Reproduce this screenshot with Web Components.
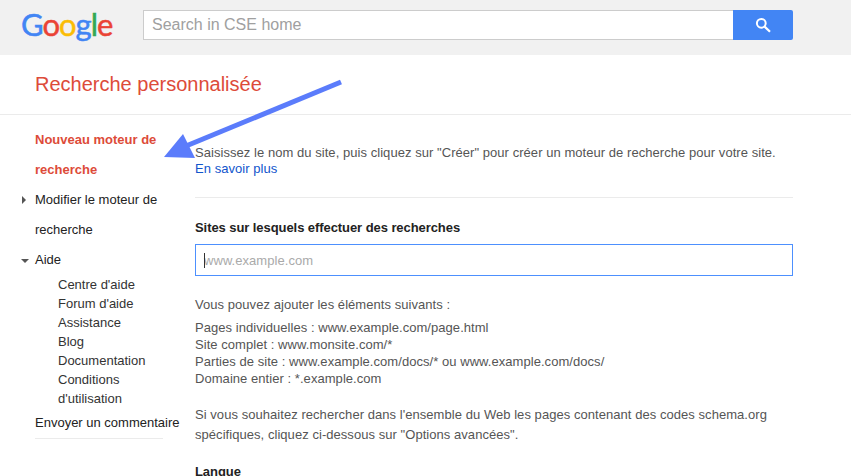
<!DOCTYPE html>
<html lang="fr">
<head>
<meta charset="utf-8">
<title>Recherche personnalisée</title>
<style>
    html, body { margin: 0; height: 476px; overflow: hidden; background: #fff; }
    body { font-family: "Liberation Sans", Arial, sans-serif; font-size: 13px; color: #222; }
</style>
</head>
<body>
<cse-app>
    <cse-header slot="header" placeholder="Search in CSE home"></cse-header>
    <cse-title slot="title">Recherche personnalisée</cse-title>
    <cse-sidebar slot="sidebar">
        <side-item active>Nouveau moteur de recherche</side-item>
        <side-item toggle="closed">Modifier le moteur de recherche</side-item>
        <side-item toggle="open">Aide
            <sub-item slot="children">Centre d'aide</sub-item>
            <sub-item slot="children">Forum d'aide</sub-item>
            <sub-item slot="children">Assistance</sub-item>
            <sub-item slot="children">Blog</sub-item>
            <sub-item slot="children">Documentation</sub-item>
            <sub-item slot="children">Conditions d'utilisation</sub-item>
        </side-item>
        <side-item tight>Envoyer un commentaire</side-item>
    </cse-sidebar>
    <cse-main slot="main"></cse-main>
    <arrow-overlay slot="overlay"></arrow-overlay>
</cse-app>

<script>
class CseApp extends HTMLElement {
    constructor() {
        super();
        this.attachShadow({ mode: 'open' });
        this.shadowRoot.innerHTML = `
            <style>
                :host { display: block; position: relative; width: 851px; height: 476px; overflow: hidden; }
                .body { display: flex; }
            </style>
            <slot name="header"></slot>
            <slot name="title"></slot>
            <div class="body">
                <slot name="sidebar"></slot>
                <slot name="main"></slot>
            </div>
            <slot name="overlay"></slot>
        `;
    }
}

class CseHeader extends HTMLElement {
    constructor() {
        super();
        this.attachShadow({ mode: 'open' });
    }

    connectedCallback() {
        this.shadowRoot.innerHTML = `
            <style>
                :host { display: flex; align-items: center; height: 55px; background: #f1f1f1; padding-left: 21px; }
                .logo {
                    width: 122px; margin-top: -8px; font-family: "Lato", sans-serif; font-size: 31px;
                    letter-spacing: -1px; line-height: 40px; -webkit-text-stroke: .5px currentColor;
                }
                .search { display: flex; width: 650px; height: 30px; margin-top: -5px; }
                .box {
                    flex: 1; box-sizing: border-box; border: 1px solid #ccc; border-right: 0; background: #fff;
                    padding-left: 8px; font-size: 16px; line-height: 27px; color: #a0a0a0;
                }
                .btn {
                    display: flex; align-items: center; justify-content: center; width: 60px;
                    background: #4285f4; border-radius: 0 2px 2px 0;
                }
            </style>
            <div class="logo"><span style="color:#4285f4">G</span><span style="color:#ea4335">o</span><span style="color:#fbbc05">o</span><span style="color:#4285f4">g</span><span style="color:#34a853">l</span><span style="color:#ea4335">e</span></div>
            <div class="search">
                <div class="box">${this.getAttribute('placeholder')}</div>
                <div class="btn">
                    <svg width="16" height="16" viewBox="0 0 16 16" fill="none" stroke="#fff">
                        <circle cx="6.3" cy="6.3" r="4.4" stroke-width="2"/>
                        <path d="M9.6 9.6 15 14.8" stroke-width="2.2"/>
                    </svg>
                </div>
            </div>
        `;
    }
}

class CseTitle extends HTMLElement {
    constructor() {
        super();
        this.attachShadow({ mode: 'open' });
        this.shadowRoot.innerHTML = `
            <style>
                :host {
                    display: block; box-sizing: border-box; height: 60px; padding: 16px 0 0 35px;
                    border-bottom: 1px solid #ebebeb; color: #dd4b39; font-size: 20px; line-height: 26px;
                }
            </style>
            <slot></slot>
        `;
    }
}

class CseSidebar extends HTMLElement {
    constructor() {
        super();
        this.attachShadow({ mode: 'open' });
        this.shadowRoot.innerHTML = `
            <style>
                :host { display: block; flex: none; width: 195px; padding-top: 10px; box-sizing: border-box; }
                .list { margin-left: 35px; width: 128px; border-bottom: 1px solid #ebebeb; }
            </style>
            <div class="list"><slot></slot></div>
        `;
    }
}

class SideItem extends HTMLElement {
    constructor() {
        super();
        this.attachShadow({ mode: 'open' });
        this.shadowRoot.innerHTML = `
            <style>
                :host { display: block; position: relative; line-height: 30px; color: #222; }
                :host([active]) { color: #dd4b39; font-weight: bold; }
                :host([tight]) { white-space: nowrap; }
                .arrow { position: absolute; width: 0; height: 0; border-style: solid; border-color: transparent; }
                :host([toggle="closed"]) .arrow { left: -13px; top: 11px; border-width: 4px 0 4px 4px; border-left-color: #555; }
                :host([toggle="open"]) .arrow { left: -14px; top: 14px; border-width: 4px 4px 0 4px; border-top-color: #555; }
                .kids { margin-left: 23px; }
            </style>
            <span class="arrow"></span>
            <slot></slot>
            <div class="kids"><slot name="children"></slot></div>
        `;
    }
}

class SubItem extends HTMLElement {
    constructor() {
        super();
        this.attachShadow({ mode: 'open' });
        this.shadowRoot.innerHTML = `
            <style>
                :host { display: block; line-height: 19px; color: #333; }
            </style>
            <slot></slot>
        `;
    }
}

class CseMain extends HTMLElement {
    constructor() {
        super();
        this.attachShadow({ mode: 'open' });
        this.shadowRoot.innerHTML = `
            <style>
                :host { display: block; width: 598px; padding-top: 30px; color: #555; line-height: 16px; letter-spacing: .05px; }
                a { color: #15c; text-decoration: none; }
                hr { border: 0; border-top: 1px solid #ebebeb; margin: 20px 0 22px; }
                h3 { margin: 0; font-size: 13px; line-height: 16px; font-weight: bold; color: #222; letter-spacing: -.07px; }
                .field {
                    box-sizing: border-box; height: 32px; margin: 8px 0 0; border: 1px solid #4d90fe;
                    padding-left: 8px; line-height: 31px; color: #aaa; position: relative;
                }
                .field::before { content: ""; position: absolute; left: 8px; top: 8px; height: 15px; border-left: 1px solid #333; }
                p { margin: 0; }
                .hint { margin-top: 21px; }
                .list { margin-top: 6px; line-height: 17px; }
                .more { margin-top: 18px; line-height: 20px; }
                .lang { margin-top: 19px; }
            </style>
            <p>Saisissez le nom du site, puis cliquez sur "Créer" pour créer un moteur de recherche pour votre site.<br><a href="#">En savoir plus</a></p>
            <hr>
            <h3>Sites sur lesquels effectuer des recherches</h3>
            <div class="field">www.example.com</div>
            <p class="hint">Vous pouvez ajouter les éléments suivants :</p>
            <p class="list">Pages individuelles : www.example.com/page.html<br>
            Site complet : www.monsite.com/*<br>
            Parties de site : www.example.com/docs/* ou www.example.com/docs/<br>
            Domaine entier : *.example.com</p>
            <p class="more">Si vous souhaitez rechercher dans l'ensemble du Web les pages contenant des codes schema.org spécifiques, cliquez ci-dessous sur "Options avancées".</p>
            <h3 class="lang">Langue</h3>
        `;
    }
}

class ArrowOverlay extends HTMLElement {
    constructor() {
        super();
        this.attachShadow({ mode: 'open' });
        this.shadowRoot.innerHTML = `
            <style>
                :host { display: block; position: absolute; left: 0; top: 0; width: 851px; height: 476px; pointer-events: none; }
            </style>
            <svg width="851" height="476" viewBox="0 0 851 476">
                <path d="M341 82 186 146" stroke="#5b7cfb" stroke-width="5" fill="none"/>
                <path d="M164 157 183 134 195 158Z" fill="#5b7cfb"/>
            </svg>
        `;
    }
}

customElements.define('cse-app', CseApp);
customElements.define('cse-header', CseHeader);
customElements.define('cse-title', CseTitle);
customElements.define('cse-sidebar', CseSidebar);
customElements.define('side-item', SideItem);
customElements.define('sub-item', SubItem);
customElements.define('cse-main', CseMain);
customElements.define('arrow-overlay', ArrowOverlay);
</script>
</body>
</html>
